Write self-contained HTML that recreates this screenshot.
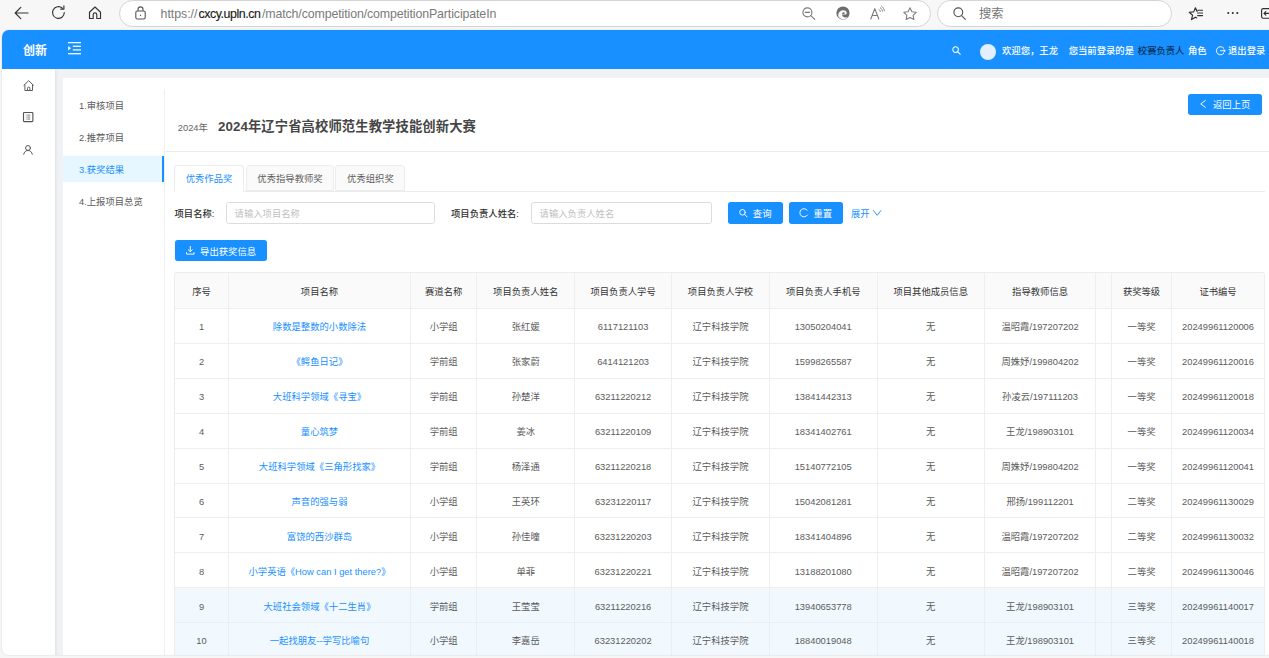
<!DOCTYPE html>
<html lang="zh-CN">
<head>
<meta charset="utf-8">
<title>创新</title>
<style>
*{box-sizing:border-box;margin:0;padding:0}
html,body{width:1269px;height:658px;overflow:hidden;background:#f6f6f6}
body{position:relative;font-family:"Liberation Sans","Noto Sans CJK SC",sans-serif;font-size:9.33px;color:#5c5c5c;line-height:1}
.abs{position:absolute}
svg{position:absolute;overflow:visible}
/* ---------- browser chrome ---------- */
#chrome{left:0;top:0;width:1269px;height:30px;background:#f7f7f7}
.pill{background:#fff;border:1px solid #d4d4d4;border-radius:13.5px;height:27px;top:-0.5px}
#url{left:160.6px;top:6px;font-size:12.4px;line-height:16px;color:#7a7a7a;white-space:nowrap;letter-spacing:-0.125px;transform:scaleY(1.09);transform-origin:0 12px}
#url i{font-style:normal;letter-spacing:-0.05px}
#url b{font-weight:400;color:#1b1b1b;letter-spacing:-0.46px;-webkit-text-stroke:0.15px #1b1b1b;margin-left:1.2px;margin-right:1.6px}
#stext{left:979px;top:5.7px;font-size:12.3px;line-height:16px;color:#757575;white-space:nowrap}
/* ---------- page ---------- */
#page{left:2px;top:30px;width:1270px;height:625px;background:#f0f2f5;border-radius:7px 0 0 6px;overflow:hidden;box-shadow:0 0 1.5px rgba(0,0,0,.22)}
#hdr{left:0;top:30px;width:1269px;height:39px;background:#1890ff;color:#fff}
#logo{left:23px;top:42px;font-size:12px;line-height:18px;font-weight:700;color:#fff}
.ht{top:43.8px;line-height:14px;font-size:9.33px;white-space:nowrap;font-weight:500;color:#fff}
#side{left:0;top:69px;width:55px;height:600px;background:#fff;box-shadow:1px 0 3px rgba(0,21,41,.08)}
#card{left:63px;top:78px;width:1210px;height:590px;background:#fff}
/* left menu */
#menuline{left:164px;top:89px;width:1px;height:580px;background:#efefef}
.mi{position:absolute;left:63px;width:101px;height:26.67px;line-height:28px;padding-left:16px;font-size:9.33px;color:#5c5c5c;white-space:nowrap}
.mi.on{background:#e6f7ff;color:#1890ff;border-right:2px solid #1890ff}
/* title */
#ttl{left:177.8px;top:115.8px;white-space:nowrap;line-height:22px;height:22px}
#ttl .y{font-size:9.33px;color:#666;margin-right:10px}
#ttl .t{font-size:13.33px;font-weight:700;color:#464646;letter-spacing:0.09px}
#hr1{left:165px;top:151px;width:1110px;height:1px;background:#ececec}
.btn{position:absolute;background:#1890ff;color:#fff;border-radius:2.7px;font-size:9.33px;white-space:nowrap;height:21.4px}
.btn span{position:absolute;top:0;line-height:24.6px;font-weight:400}
/* tabs */
#tabline{left:174px;top:191px;width:1091px;height:1px;background:#ececec}
.tab{position:absolute;top:165px;height:26px;line-height:27px;background:#fafafa;border:1px solid #ececec;border-radius:3px 3px 0 0;text-align:center;font-size:9.33px;color:#5c5c5c}
.tab.on{background:#fff;color:#1890ff;border-bottom-color:#fff;height:27px}
.lbl{position:absolute;font-size:9.33px;color:#2e2e2e;line-height:24.8px;white-space:nowrap;font-weight:500}
.inp{position:absolute;height:21.4px;border:1px solid #dcdcdc;border-radius:2.7px;background:#fff;line-height:22.4px;padding-left:7.6px;color:#bfbfbf;font-size:9.33px;white-space:nowrap}
/* table */
#tbl{position:absolute;left:174px;top:272px;border-collapse:separate;border-spacing:0;table-layout:fixed;width:1091px;border-top:1px solid #ececec;border-left:1px solid #ececec;border-radius:3px 3px 0 0}
#tbl th,#tbl td{border-right:1px solid #eeeeee;border-bottom:1px solid #eeeeee;text-align:center;font-size:9.33px;white-space:nowrap;overflow:hidden;padding:4px 0 0 0}
#tbl th{height:36px;padding-top:3.6px;background:#fafafa;color:#333;font-weight:400}
#tbl th:first-child{border-top-left-radius:3px}
#tbl th:last-child{border-top-right-radius:3px}
#tbl td{height:34.92px;color:#5c5c5c;background:#fff}
#tbl td.lk{color:#1890ff}
#tbl tr.hv td{background:#f1f9ff;border-right-color:#e8f0f6;border-bottom-color:#e8f0f6}
</style>
</head>
<body>
<!-- ================= browser chrome ================= -->
<div id="chrome" class="abs">
  <div class="pill abs" style="left:119px;width:812px"></div>
  <div class="pill abs" style="left:937px;width:235px"></div>
  <div id="url" class="abs"><i>https://</i><b>cxcy.upln.cn</b>/match/competition/competitionParticipateIn</div>
  <div id="stext" class="abs">搜索</div>
  <!-- back arrow -->
  <svg style="left:14px;top:6px" width="15" height="14" viewBox="0 0 15 14" fill="none" stroke="#363636" stroke-width="1.18" stroke-linecap="round" stroke-linejoin="round"><path d="M14 7H1.3M6.8 1.3L1.2 7l5.600 5.700"/></svg>
  <!-- reload -->
  <svg style="left:51px;top:5px" width="15" height="15" viewBox="0 0 15 15" fill="none" stroke="#363636" stroke-width="1.18" stroke-linecap="round" stroke-linejoin="round"><path d="M13.300 7.600a5.900 5.900 0 1 1-1.900-4.400"/><path d="M12.900 0.900v3.200H9.700"/></svg>
  <!-- home -->
  <svg style="left:88px;top:6px" width="14" height="14" viewBox="0 0 14 14" fill="none" stroke="#363636" stroke-width="1.18" stroke-linejoin="round"><path d="M1.500 6.200L7 1l5.500 5.200v6.300H8.800V8.600a1.800 1.800 0 0 0-3.600 0v3.900H1.500z"/></svg>
  <!-- lock -->
  <svg style="left:135px;top:6px" width="11" height="14" viewBox="0 0 11 14" fill="none" stroke="#555" stroke-width="1.100" stroke-linejoin="round"><rect x="0.800" y="5" width="9.400" height="8" rx="1.600"/><path d="M3 5V3.400a2.500 2.500 0 0 1 5 0V5"/><circle cx="5.500" cy="9.200" r="0.700" fill="#555" stroke="none"/></svg>
  <!-- zoom out -->
  <svg style="left:802px;top:7px" width="14" height="13" viewBox="0 0 14 13" fill="none" stroke="#7a7a7a" stroke-width="1.100" stroke-linecap="round"><circle cx="5.400" cy="5.400" r="4.500"/><path d="M3.200 5.400h4.400M8.800 8.600l4 3.800"/></svg>
  <!-- edge-like swirl -->
  <svg style="left:836px;top:6px" width="14" height="14" viewBox="0 0 14 14"><circle cx="7" cy="7" r="6.600" fill="#6e6e6e"/><path d="M2.200 8.800c.3-3 2.600-4.600 5-4.600 2.200 0 3.600 1.300 3.600 2.700 0 .900-.7 1.500-1.500 1.500H6.100c0 1.700 1.600 3 3.500 3 .8 0 1.500-.2 2.100-.5-1.100 1.600-2.900 2.500-4.900 2.400-2.700-.2-4.800-2.200-4.600-4.500z" fill="#f7f7f7"/><path d="M6.200 8.200c-.2-1.100.4-2 1.400-2 .9 0 1.400.6 1.400 1.300" fill="#6e6e6e"/></svg>
  <!-- read aloud A -->
  <svg style="left:870px;top:6px" width="15" height="14" viewBox="0 0 15 14" fill="none" stroke="#7a7a7a" stroke-width="1.100" stroke-linecap="round" stroke-linejoin="round"><path d="M0.800 13L4.800 2.600 8.800 13M2.200 9.500h5.200"/><path d="M9 3.500c.8.500 1.200 1.200 1.300 2M10.300 1.800c1.300.8 2 2 2.200 3.400M11.600 0.300c1.700 1.100 2.600 2.700 2.800 4.500" stroke-width="0.900"/></svg>
  <!-- star -->
  <svg style="left:903px;top:7px" width="14" height="13" viewBox="0 0 14 13" fill="none" stroke="#7a7a7a" stroke-width="1.050" stroke-linejoin="round"><path d="M7 0.800l1.900 3.900 4.300.6-3.100 3 .75 4.250L7 10.500l-3.850 2.050.75-4.250-3.100-3 4.300-.6z"/></svg>
  <!-- search (browser) -->
  <svg style="left:953px;top:7px" width="13" height="13" viewBox="0 0 13 13" fill="none" stroke="#555" stroke-width="1.150" stroke-linecap="round"><circle cx="5.300" cy="5.300" r="4.400"/><path d="M8.600 8.600l3.700 3.700"/></svg>
  <!-- favourites list -->
  <svg style="left:1188px;top:7px" width="16" height="13" viewBox="0 0 16 13" fill="none" stroke="#2f2f2f" stroke-width="1.150" stroke-linejoin="round" stroke-linecap="round"><path d="M9.100 4.500L7.400 0.800 5.700 4.900l-4.500.4 3.400 2.900-1.100 4.400 3.900-2.400 1.300.8"/><path d="M9.600 3.200h5M9.600 5.900h5M9.600 8.600h5" stroke-width="1.050"/></svg>
  <!-- dots -->
  <svg style="left:1227px;top:11px" width="12" height="4" viewBox="0 0 12 4"><circle cx="1.300" cy="2" r="1.050" fill="#2f2f2f"/><circle cx="5.800" cy="2" r="1.050" fill="#2f2f2f"/><circle cx="10.300" cy="2" r="1.050" fill="#2f2f2f"/></svg>
  <!-- sidebar toggle (cut by edge) -->
  <svg style="left:1261px;top:8px" width="12" height="11" viewBox="0 0 12 11" fill="none" stroke="#2f2f2f" stroke-width="1.150" stroke-linecap="round" stroke-linejoin="round"><rect x="0.600" y="0.600" width="12" height="9.600" rx="1.600"/><path d="M7.500 5.400H3.200M4.800 3.600L3 5.400l1.800 1.800"/></svg>
</div>

<!-- ================= page ================= -->
<div id="page" class="abs"></div>
<div style="position:absolute;left:2px;top:30px;width:1270px;height:625px;border-radius:7px 0 0 6px;overflow:hidden">
 <div style="position:absolute;left:-2px;top:-30px;width:1269px;height:658px">
  <div id="side" class="abs"></div>
  <div id="hdr" class="abs"></div>
  <div id="logo" class="abs">创新</div>
  <!-- menu unfold -->
  <svg style="left:68px;top:42px" width="13" height="12.400" viewBox="0 0 13 12.400" fill="#fff"><rect x="0" y="0" width="13" height="1.250"/><rect x="4.800" y="3.650" width="8.200" height="1.250"/><rect x="4.800" y="7.300" width="8.200" height="1.250"/><rect x="0" y="11.100" width="13" height="1.250"/><path d="M0.200 3.900l2.800 2.300-2.800 2.300z"/></svg>
  <!-- header search -->
  <svg style="left:952px;top:46px" width="9" height="9" viewBox="0 0 9 9" fill="none" stroke="#fff" stroke-width="1.050" stroke-linecap="round"><circle cx="3.600" cy="3.600" r="2.800"/><path d="M5.800 5.800l2.500 2.500"/></svg>
  <div class="abs" style="left:979.500px;top:43.500px;width:16.300px;height:16.300px;border-radius:50%;background:#e1efff"></div>
  <div class="ht abs" style="left:1002px">欢迎您，王龙</div>
  <div class="ht abs" style="left:1068.700px">您当前登录的是</div>
  <div class="ht abs" style="left:1137.800px;color:#083259">校赛负责人</div>
  <div class="ht abs" style="left:1188px">角色</div>
  <!-- logout -->
  <svg style="left:1216px;top:45.800px" width="9.500" height="9.500" viewBox="0 0 9.500 9.500" fill="none" stroke="#fff" stroke-width="0.950" stroke-linecap="round"><path d="M7.700 2.100a4.100 4.100 0 1 0 0 5.300"/><path d="M4.400 4.750h4.700M7.800 3.500l1.300 1.250-1.300 1.250"/></svg>
  <div class="ht abs" style="left:1228px">退出登录</div>

  <!-- sidebar icons -->
  <svg style="left:22.500px;top:79.500px" width="11.400" height="11.200" viewBox="0 0 11.400 11.200" fill="none" stroke="#555" stroke-width="0.950" stroke-linejoin="round"><path d="M0.600 5.600L5.700 0.700l5.100 4.900M1.900 4.700v5.800h7.600V4.700"/><path d="M4.500 10.500V8.300a1.200 1.200 0 0 1 2.400 0v2.200"/></svg>
  <svg style="left:23px;top:112.300px" width="10.400" height="10.200" viewBox="0 0 10.400 10.200" fill="none" stroke="#555" stroke-width="0.950"><rect x="0.500" y="0.500" width="9.400" height="9.200" rx="0.900" stroke-width="1.150"/><path d="M4.300 3.100h2.900M4.300 5.100h2.900M4.300 7.100h2.900" stroke-width="0.800"/><path d="M2.900 3.100h.7M2.900 5.100h.7M2.900 7.100h.7" stroke-width="0.800"/></svg>
  <svg style="left:23.400px;top:144.500px" width="10" height="9.800" viewBox="0 0 10 9.800" fill="none" stroke="#555" stroke-width="1" stroke-linecap="round"><circle cx="5" cy="3" r="2.450"/><path d="M0.700 9.300c.5-2.400 2.200-3.800 4.300-3.800s3.800 1.400 4.300 3.800"/></svg>

  <div id="card" class="abs"></div>
  <div id="menuline" class="abs"></div>
  <div class="mi" style="top:91.7px">1.审核项目</div>
  <div class="mi" style="top:123.7px">2.推荐项目</div>
  <div class="mi on" style="top:155.7px">3.获奖结果</div>
  <div class="mi" style="top:187.7px">4.上报项目总览</div>

  <div id="ttl" class="abs"><span class="y">2024年</span><span class="t">2024年辽宁省高校师范生教学技能创新大赛</span></div>
  <div class="btn" style="left:1188px;top:94px;width:73.500px">
    <svg style="left:12px;top:6.300px" width="6" height="8" viewBox="0 0 6 8" fill="none" stroke="#fff" stroke-width="0.950" stroke-linecap="round" stroke-linejoin="round"><path d="M5.300 0.500L0.800 3.900l4.500 3.400"/></svg>
    <span style="left:25px;line-height:22.8px">返回上页</span></div>
  <div id="hr1" class="abs"></div>
  <div id="tabline" class="abs"></div>
  <div class="tab on" style="left:174px;width:70px">优秀作品奖</div>
  <div class="tab" style="left:246px;width:88px">优秀指导教师奖</div>
  <div class="tab" style="left:335.400px;width:70px">优秀组织奖</div>

  <div class="lbl" style="left:174.500px;top:202.400px">项目名称:</div>
  <div class="inp" style="left:226px;top:202.400px;width:208.600px">请输入项目名称</div>
  <div class="lbl" style="left:451px;top:202.400px">项目负责人姓名:</div>
  <div class="inp" style="left:531px;top:202.400px;width:181px">请输入负责人姓名</div>
  <div class="btn" style="left:728px;top:202.400px;width:54.800px">
    <svg style="left:11px;top:6.400px" width="9" height="9" viewBox="0 0 9 9" fill="none" stroke="#fff" stroke-width="0.950" stroke-linecap="round"><circle cx="3.500" cy="3.300" r="2.800"/><path d="M5.600 5.400l2.500 2.500"/></svg>
    <span style="left:24.800px">查询</span></div>
  <div class="btn" style="left:788.700px;top:202.400px;width:54.800px">
    <svg style="left:10.500px;top:6px" width="9.600" height="9.600" viewBox="0 0 9.600 9.600" fill="none" stroke="#fff" stroke-width="0.950" stroke-linecap="round"><path d="M8.300 2.300a4.100 4.100 0 1 0 .1 4.800"/></svg>
    <span style="left:24.800px">重置</span></div>
  <div class="abs" style="left:851px;top:202.400px;line-height:24.400px;color:#1890ff;white-space:nowrap">展开</div>
  <svg style="left:873px;top:210px" width="8.400" height="6" viewBox="0 0 8.400 6" fill="none" stroke="#1890ff" stroke-width="0.950" stroke-linecap="round" stroke-linejoin="round"><path d="M0.500 0.600l3.700 4.700L7.900 0.600"/></svg>
  <div class="btn" style="left:174.500px;top:240px;width:92.300px">
    <svg style="left:11.300px;top:6px" width="8.600" height="8.600" viewBox="0 0 8.600 8.600" fill="none" stroke="#fff" stroke-width="0.950" stroke-linecap="round" stroke-linejoin="round"><path d="M4.300 0.400v5.200M2.300 3.800l2 1.900 2-1.900M0.500 6.600v1.500h7.600V6.600"/></svg>
    <span style="left:25.600px">导出获奖信息</span></div>

  <table id="tbl">
    <colgroup>
      <col style="width:54px"><col style="width:182px"><col style="width:66.400px"><col style="width:97.700px"><col style="width:97px"><col style="width:97.800px"><col style="width:107.700px"><col style="width:107.300px"><col style="width:111.400px"><col style="width:15.900px"><col style="width:59.800px"><col style="width:93.200px">
    </colgroup>
    <thead><tr>
      <th>序号</th><th>项目名称</th><th>赛道名称</th><th>项目负责人姓名</th><th>项目负责人学号</th><th>项目负责人学校</th><th>项目负责人手机号</th><th>项目其他成员信息</th><th>指导教师信息</th><th></th><th>获奖等级</th><th>证书编号</th>
    </tr></thead>
    <tbody>
        <tr><td>1</td><td class="lk">除数是整数的小数除法</td><td>小学组</td><td>张红媛</td><td>6117121103</td><td>辽宁科技学院</td><td>13050204041</td><td>无</td><td>温昭霞/197207202</td><td></td><td>一等奖</td><td>20249961120006</td></tr>
        <tr><td>2</td><td class="lk">《鳄鱼日记》</td><td>学前组</td><td>张家蔚</td><td>6414121203</td><td>辽宁科技学院</td><td>15998265587</td><td>无</td><td>周姝妤/199804202</td><td></td><td>一等奖</td><td>20249961120016</td></tr>
        <tr><td>3</td><td class="lk">大班科学领域《寻宝》</td><td>学前组</td><td>孙楚洋</td><td>63211220212</td><td>辽宁科技学院</td><td>13841442313</td><td>无</td><td>孙凌云/197111203</td><td></td><td>一等奖</td><td>20249961120018</td></tr>
        <tr><td>4</td><td class="lk">童心筑梦</td><td>学前组</td><td>姜冰</td><td>63211220109</td><td>辽宁科技学院</td><td>18341402761</td><td>无</td><td>王龙/198903101</td><td></td><td>一等奖</td><td>20249961120034</td></tr>
        <tr><td>5</td><td class="lk">大班科学领域《三角形找家》</td><td>学前组</td><td>杨泽通</td><td>63211220218</td><td>辽宁科技学院</td><td>15140772105</td><td>无</td><td>周姝妤/199804202</td><td></td><td>一等奖</td><td>20249961120041</td></tr>
        <tr><td>6</td><td class="lk">声音的强与弱</td><td>小学组</td><td>王英环</td><td>63231220117</td><td>辽宁科技学院</td><td>15042081281</td><td>无</td><td>邢扬/199112201</td><td></td><td>二等奖</td><td>20249961130029</td></tr>
        <tr><td>7</td><td class="lk">富饶的西沙群岛</td><td>小学组</td><td>孙佳曈</td><td>63231220203</td><td>辽宁科技学院</td><td>18341404896</td><td>无</td><td>温昭霞/197207202</td><td></td><td>二等奖</td><td>20249961130032</td></tr>
        <tr><td>8</td><td class="lk">小学英语《How can I get there?》</td><td>小学组</td><td>单菲</td><td>63231220221</td><td>辽宁科技学院</td><td>13188201080</td><td>无</td><td>温昭霞/197207202</td><td></td><td>二等奖</td><td>20249961130046</td></tr>
        <tr class="hv"><td>9</td><td class="lk">大班社会领域《十二生肖》</td><td>学前组</td><td>王莹莹</td><td>63211220216</td><td>辽宁科技学院</td><td>13940653778</td><td>无</td><td>王龙/198903101</td><td></td><td>三等奖</td><td>20249961140017</td></tr>
        <tr class="hv"><td>10</td><td class="lk">一起找朋友--学写比喻句</td><td>小学组</td><td>李嘉岳</td><td>63231220202</td><td>辽宁科技学院</td><td>18840019048</td><td>无</td><td>王龙/198903101</td><td></td><td>三等奖</td><td>20249961140018</td></tr>
    </tbody>
  </table>
 </div>
</div>
</body>
</html>
